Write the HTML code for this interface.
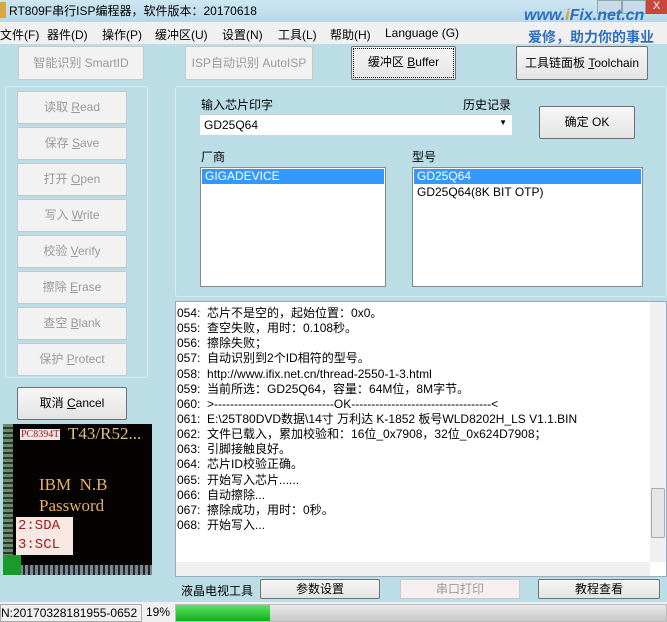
<!DOCTYPE html>
<html><head><meta charset="utf-8"><style>
*{box-sizing:border-box;margin:0;padding:0}
body{width:667px;height:622px;overflow:hidden;background:#badde6;font-family:"Liberation Sans","Noto Sans CJK SC",sans-serif;font-size:12px;color:#000;position:relative}
.a{position:absolute}
.btn{position:absolute;background:linear-gradient(#f6f6f6,#e4e4e4);border:1px solid #707070;border-radius:2px;text-align:center;font-size:12px}
.dis{background:#f2f2f2;border:1px solid #c8c8c8;color:#9a9a9a}
.list{position:absolute;background:#fff;border:1px solid #828790}
.sel{background:#3399ff;color:#fff;padding-left:3px;height:15px;line-height:15px;margin:1px}
.log div{height:15.15px;line-height:15px;white-space:nowrap}
.m{position:absolute;top:26px}
</style></head><body>
<div class="a" style="left:0;top:0;width:667px;height:22px;background:linear-gradient(#cde6f2,#b8d8e8)"></div>
<div class="a" style="left:0;top:2px;width:6px;height:16px;background:#d9a640"></div>
<div class="a" style="left:9px;top:2px;font-size:12px">RT809F串行ISP编程器，软件版本：20170618</div>
<div class="a" style="left:597px;top:0;width:25px;height:14px;background:#c9dbe8;border:1px solid #8aa"></div>
<div class="a" style="left:622px;top:0;width:24px;height:14px;background:#c9dbe8;border:1px solid #8aa"></div>
<div class="a" style="left:646px;top:0;width:21px;height:14px;background:#c8463a;color:#fff;font-size:11px;text-align:center;line-height:12px">X</div>
<div class="a" style="left:0;top:22px;width:667px;height:22px;background:#f0f0f0"></div>
<div class="m" style="left:0">文件(F)</div>
<div class="m" style="left:47px">器件(D)</div>
<div class="m" style="left:102px">操作(P)</div>
<div class="m" style="left:155px">缓冲区(U)</div>
<div class="m" style="left:222px">设置(N)</div>
<div class="m" style="left:278px">工具(L)</div>
<div class="m" style="left:330px">帮助(H)</div>
<div class="m" style="left:385px">Language (G)</div>
<div class="a" style="left:524px;top:7px;color:#2e6fbf;font-style:italic;font-size:16px;font-weight:bold">www.<span style="color:#e0a020">i</span>Fix.net.cn</div>
<div class="a" style="left:528px;top:27px;color:#2e6fbf;font-size:14px;font-weight:bold">爱修，助力你的事业</div>

<div class="btn dis" style="left:18px;top:46px;width:126px;height:34px;line-height:32px">智能识别 SmartID</div>
<div class="btn dis" style="left:185px;top:46px;width:128px;height:34px;line-height:32px">ISP自动识别 AutoISP</div>
<div class="btn" style="left:351px;top:46px;width:105px;height:34px;line-height:30px;outline:1px dotted #000;outline-offset:-3px">缓冲区 <u>B</u>uffer</div>
<div class="btn" style="left:516px;top:46px;width:132px;height:34px;line-height:32px">工具链面板 <u>T</u>oolchain</div>

<div class="a" style="left:5px;top:86px;width:143px;height:292px;border:1px solid #d6ecf2;border-radius:3px"></div>
<div class="btn dis" style="left:17px;top:91px;width:110px;height:33px;line-height:31px">读取 <u>R</u>ead</div>
<div class="btn dis" style="left:17px;top:127px;width:110px;height:33px;line-height:31px">保存 <u>S</u>ave</div>
<div class="btn dis" style="left:17px;top:163px;width:110px;height:33px;line-height:31px">打开 <u>O</u>pen</div>
<div class="btn dis" style="left:17px;top:199px;width:110px;height:33px;line-height:31px">写入 <u>W</u>rite</div>
<div class="btn dis" style="left:17px;top:235px;width:110px;height:33px;line-height:31px">校验 <u>V</u>erify</div>
<div class="btn dis" style="left:17px;top:271px;width:110px;height:33px;line-height:31px">擦除 <u>E</u>rase</div>
<div class="btn dis" style="left:17px;top:307px;width:110px;height:33px;line-height:31px">查空 <u>B</u>lank</div>
<div class="btn dis" style="left:17px;top:343px;width:110px;height:33px;line-height:31px">保护 <u>P</u>rotect</div>
<div class="btn" style="left:17px;top:387px;width:110px;height:33px;line-height:31px">取消 <u>C</u>ancel</div>

<div class="a" style="left:3px;top:424px;width:149px;height:151px;background:#050302"></div>
<div class="a" style="left:3px;top:424px;width:10px;height:151px;background:repeating-linear-gradient(#6b8a6b 0 3px,#2a3a2a 3px 5px)"></div>
<div class="a" style="left:20px;top:565px;width:132px;height:10px;background:repeating-linear-gradient(90deg,#7a8a8a 0 3px,#223 3px 5px)"></div>
<div class="a" style="left:3px;top:555px;width:18px;height:20px;background:#1a9a2a"></div>
<div class="a" style="left:20px;top:429px;background:#f4e4e4;color:#a02020;font-family:'Liberation Serif',serif;font-size:10px;padding:0 1px">PC8394T</div>
<div class="a" style="left:68px;top:424px;color:#e0c080;font-family:'Liberation Serif',serif;font-size:17px">T43/R52...</div>
<div class="a" style="left:39px;top:474px;color:#e8b060;font-family:'Liberation Serif',serif;font-size:17px;line-height:21px">IBM&nbsp; N.B<br>Password</div>
<div class="a" style="left:16px;top:517px;width:57px;height:38px;background:#f8e8e4;color:#a02020;font-family:'Liberation Mono',monospace;font-size:14px;line-height:19px;padding-left:2px">2:SDA<br>3:SCL</div>

<div class="a" style="left:175px;top:86px;width:492px;height:211px;border:1px solid #d6ecf2;border-radius:3px"></div>
<div class="a" style="left:201px;top:96px">输入芯片印字</div>
<div class="a" style="left:463px;top:96px">历史记录</div>
<div class="a" style="left:200px;top:114px;width:312px;height:21px;background:#fff;border-top:1px solid #ccc;padding:3px 0 0 4px">GD25Q64<span style="position:absolute;right:5px;top:3px;font-size:8px">▼</span></div>
<div class="btn" style="left:539px;top:106px;width:96px;height:33px;line-height:31px">确定 OK</div>
<div class="a" style="left:201px;top:148px">厂商</div>
<div class="a" style="left:412px;top:148px">型号</div>
<div class="list" style="left:200px;top:167px;width:186px;height:120px"><div class="sel">GIGADEVICE</div></div>
<div class="list" style="left:412px;top:167px;width:231px;height:120px"><div class="sel">GD25Q64</div><div style="padding-left:4px;line-height:15px">GD25Q64(8K BIT OTP)</div></div>

<div class="a" style="left:175px;top:301px;width:492px;height:276px;background:#fff;border:1px solid #9ab"></div>
<div class="a log" style="left:177px;top:306px;font-size:12px">
<div>054:&nbsp; 芯片不是空的，起始位置：0x0。</div>
<div>055:&nbsp; 查空失败，用时：0.108秒。</div>
<div>056:&nbsp; 擦除失败；</div>
<div>057:&nbsp; 自动识别到2个ID相符的型号。</div>
<div>058:&nbsp; http://www.ifix.net.cn/thread-2550-1-3.html</div>
<div>059:&nbsp; 当前所选：GD25Q64，容量：64M位，8M字节。</div>
<div>060:&nbsp; &gt;------------------------------OK-----------------------------------&lt;</div>
<div>061:&nbsp; E:\25T80DVD数据\14寸 万利达 K-1852 板号WLD8202H_LS V1.1.BIN</div>
<div>062:&nbsp; 文件已载入，累加校验和：16位_0x7908，32位_0x624D7908；</div>
<div>063:&nbsp; 引脚接触良好。</div>
<div>064:&nbsp; 芯片ID校验正确。</div>
<div>065:&nbsp; 开始写入芯片......</div>
<div>066:&nbsp; 自动擦除...</div>
<div>067:&nbsp; 擦除成功，用时：0秒。</div>
<div>068:&nbsp; 开始写入...</div>
</div>
<div class="a" style="left:650px;top:302px;width:16px;height:260px;background:#f0f0f0"></div>
<div class="a" style="left:651px;top:488px;width:14px;height:50px;background:#e6e6e6;border:1px solid #aaa;border-radius:2px"></div>
<div class="a" style="left:176px;top:562px;width:474px;height:14px;background:#f0f0f0"></div>

<div class="a" style="left:181px;top:582px">液晶电视工具</div>
<div class="btn" style="left:260px;top:579px;width:120px;height:20px;line-height:18px">参数设置</div>
<div class="btn dis" style="left:400px;top:579px;width:120px;height:20px;line-height:18px;background:#f6eef0">串口打印</div>
<div class="btn" style="left:538px;top:579px;width:122px;height:20px;line-height:18px">教程查看</div>

<div class="a" style="left:0;top:602px;width:667px;height:20px;background:#f0f0f0"></div>
<div class="a" style="left:0;top:604px;width:142px;height:18px;border:1px solid #aaa;font-size:12px;line-height:16px;white-space:nowrap;overflow:hidden">N:20170328181955-0652</div>
<div class="a" style="left:146px;top:605px;font-size:12px">19%</div>
<div class="a" style="left:175px;top:604px;width:492px;height:18px;background:linear-gradient(#e8e8e8,#c8c8c8);border:1px solid #bbb"></div>
<div class="a" style="left:176px;top:605px;width:94px;height:16px;background:linear-gradient(#60e060,#10b020)"></div>
</body></html>
